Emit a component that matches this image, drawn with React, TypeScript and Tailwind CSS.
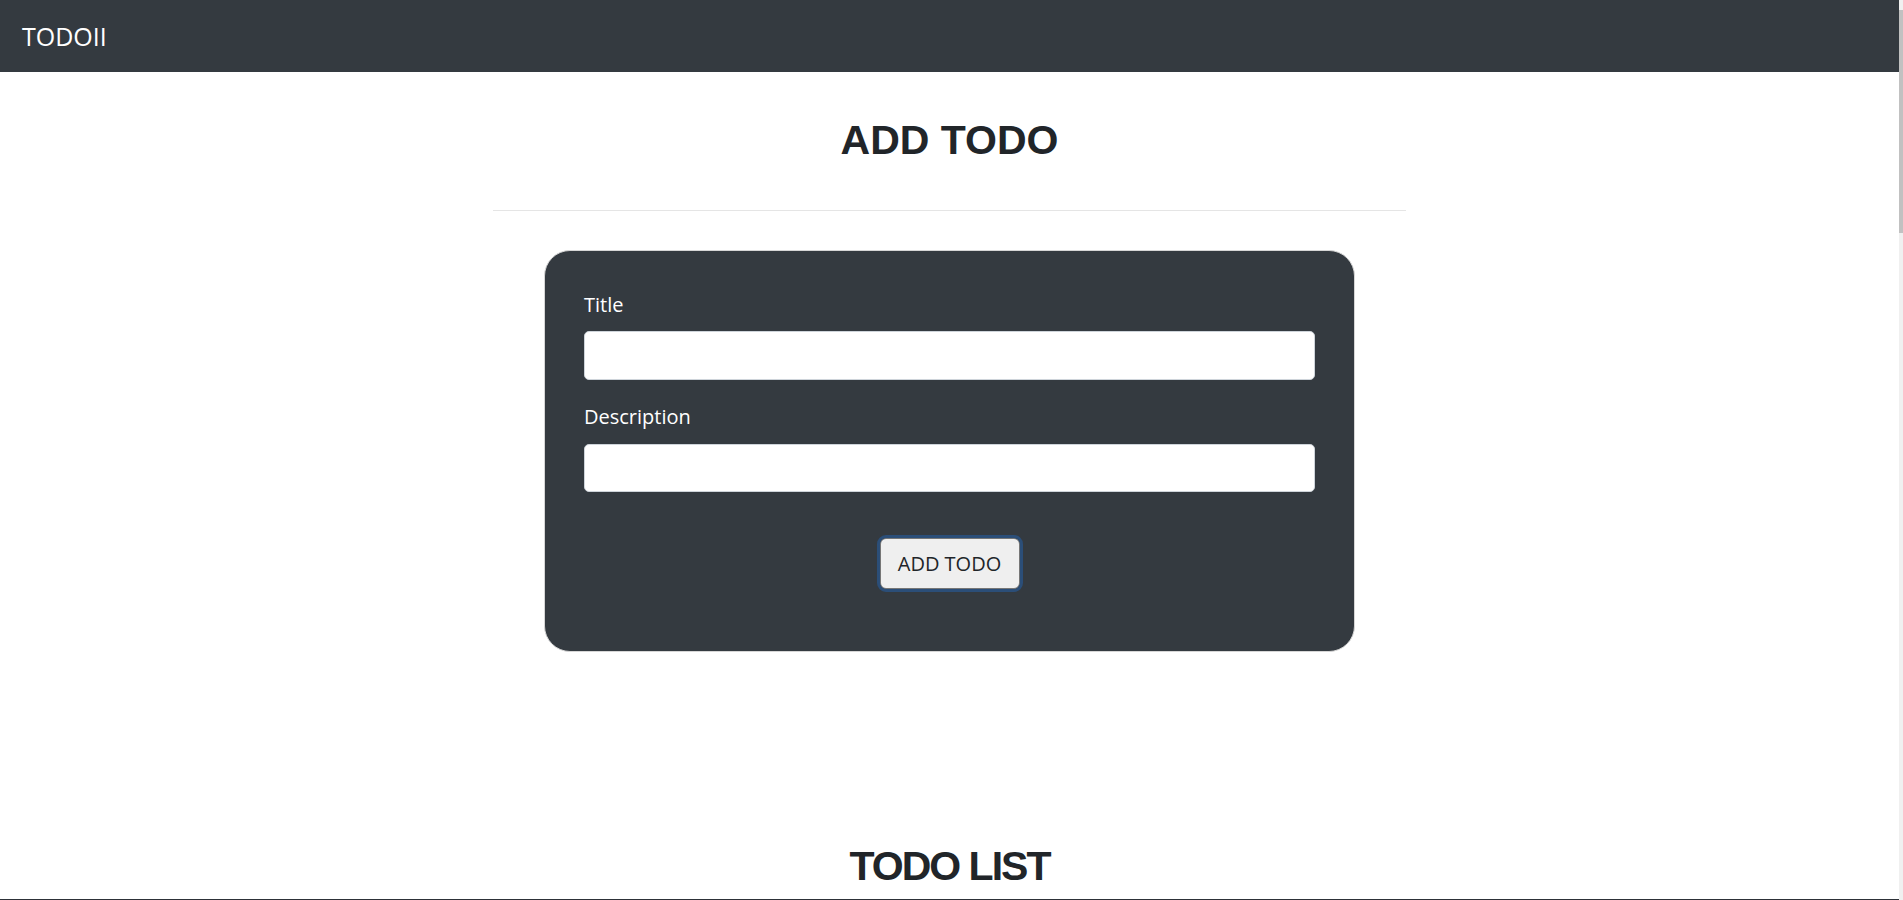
export default function App() {
  return (
    <div className="h-[900px] overflow-hidden flex bg-white" style={{ fontFamily: '"Open Sans", sans-serif' }}>
      <div className="flex-1 flex flex-col">
        {/* Navbar */}
        <nav className="h-[72px] bg-[#343a40] flex items-center px-[22px] shrink-0">
          <span className="text-white text-[25px] leading-none">TODOII</span>
        </nav>

        <main className="flex-1 flex flex-col items-center">
          <h1
            className="mt-[44px] text-[41px] leading-[1.2] font-bold text-[#212529]"
            style={{ fontFamily: '"Liberation Sans", Arial, sans-serif' }}
          >
            ADD TODO
          </h1>
          <hr className="mt-[45px] w-[913px] border-0 border-t border-[#e5e5e5]" />

          {/* Form card */}
          <form className="mt-[39px] w-[811px] bg-[#343a40] border border-[#d6d6d6] rounded-[26px] pt-[39px] pb-[62px] px-[39px] flex flex-col">
            <label className="text-white text-[20px] leading-[30px] mb-[11px]">Title</label>
            <input className="h-[49px] bg-white border border-[#ced4da] rounded-[5px] px-3 outline-none" />
            <label className="text-white text-[20px] leading-[30px] mt-[22px] mb-[12px]">Description</label>
            <input className="h-[48px] bg-white border border-[#ced4da] rounded-[5px] px-3 outline-none" />
            <div className="mt-[46px] flex justify-center">
              <button
                type="button"
                className="w-[140px] h-[51px] bg-[#efefef] text-[#212529] text-[20px] rounded-[6px] border border-[#767676] outline-[3px] outline-solid outline-[#2b4e78] outline-offset-0"
              >
                ADD TODO
              </button>
            </div>
          </form>

          <h1
            className="mt-[190px] text-[41px] leading-[1.2] font-bold text-[#212529] tracking-[-2px]"
            style={{ fontFamily: '"Liberation Sans", Arial, sans-serif' }}
          >
            TODO LIST
          </h1>
        </main>
        <div className="h-px bg-[#2d3138] shrink-0" />
      </div>

      {/* Scrollbar */}
      <div className="w-[4px] bg-[#f0f0f0] flex flex-col pt-[10px]">
        <div className="h-[223px] bg-[#c1c1c1]" />
      </div>
    </div>
  )
}
